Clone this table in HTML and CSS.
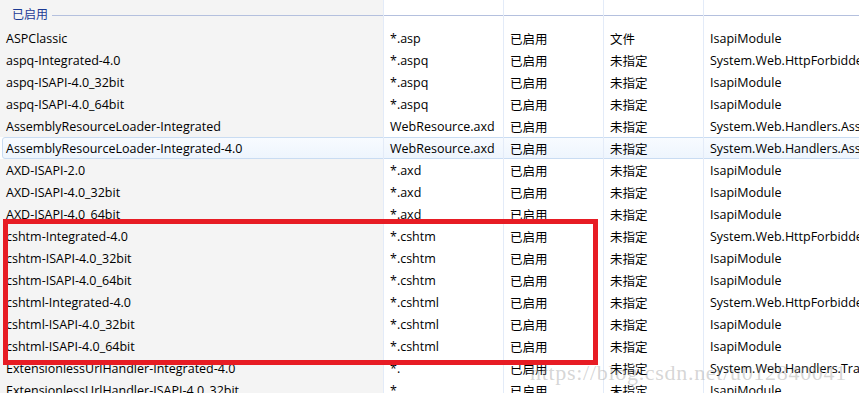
FILE: index.html
```html
<!DOCTYPE html>
<html lang="zh-CN">
<head>
<meta charset="utf-8">
<title>处理程序映射</title>
<link rel="stylesheet" href="styles.css">
</head>
<body>
<div class="list">
  <div class="row group">
    <div class="cell c1"><span class="group-title">已启用</span><span class="group-line"></span></div>
    <div class="cell c2"><span class="group-line full"></span></div>
    <div class="cell c3"><span class="group-line full"></span></div>
    <div class="cell c4"><span class="group-line full"></span></div>
    <div class="cell c5"><span class="group-line full"></span></div>
  </div>
  <div class="row"><div class="cell c1">ASPClassic</div><div class="cell c2">*.asp</div><div class="cell c3">已启用</div><div class="cell c4">文件</div><div class="cell c5">IsapiModule</div></div>
  <div class="row"><div class="cell c1">aspq-Integrated-4.0</div><div class="cell c2">*.aspq</div><div class="cell c3">已启用</div><div class="cell c4">未指定</div><div class="cell c5">System.Web.HttpForbiddenHandler</div></div>
  <div class="row"><div class="cell c1">aspq-ISAPI-4.0_32bit</div><div class="cell c2">*.aspq</div><div class="cell c3">已启用</div><div class="cell c4">未指定</div><div class="cell c5">IsapiModule</div></div>
  <div class="row"><div class="cell c1">aspq-ISAPI-4.0_64bit</div><div class="cell c2">*.aspq</div><div class="cell c3">已启用</div><div class="cell c4">未指定</div><div class="cell c5">IsapiModule</div></div>
  <div class="row"><div class="cell c1">AssemblyResourceLoader-Integrated</div><div class="cell c2">WebResource.axd</div><div class="cell c3">已启用</div><div class="cell c4">未指定</div><div class="cell c5">System.Web.Handlers.AssemblyResourceLoader</div></div>
  <div class="row selected"><div class="cell c1">AssemblyResourceLoader-Integrated-4.0</div><div class="cell c2">WebResource.axd</div><div class="cell c3">已启用</div><div class="cell c4">未指定</div><div class="cell c5">System.Web.Handlers.AssemblyResourceLoader</div></div>
  <div class="row"><div class="cell c1">AXD-ISAPI-2.0</div><div class="cell c2">*.axd</div><div class="cell c3">已启用</div><div class="cell c4">未指定</div><div class="cell c5">IsapiModule</div></div>
  <div class="row"><div class="cell c1">AXD-ISAPI-4.0_32bit</div><div class="cell c2">*.axd</div><div class="cell c3">已启用</div><div class="cell c4">未指定</div><div class="cell c5">IsapiModule</div></div>
  <div class="row"><div class="cell c1">AXD-ISAPI-4.0_64bit</div><div class="cell c2">*.axd</div><div class="cell c3">已启用</div><div class="cell c4">未指定</div><div class="cell c5">IsapiModule</div></div>
  <div class="row"><div class="cell c1">cshtm-Integrated-4.0</div><div class="cell c2">*.cshtm</div><div class="cell c3">已启用</div><div class="cell c4">未指定</div><div class="cell c5">System.Web.HttpForbiddenHandler</div></div>
  <div class="row"><div class="cell c1">cshtm-ISAPI-4.0_32bit</div><div class="cell c2">*.cshtm</div><div class="cell c3">已启用</div><div class="cell c4">未指定</div><div class="cell c5">IsapiModule</div></div>
  <div class="row"><div class="cell c1">cshtm-ISAPI-4.0_64bit</div><div class="cell c2">*.cshtm</div><div class="cell c3">已启用</div><div class="cell c4">未指定</div><div class="cell c5">IsapiModule</div></div>
  <div class="row"><div class="cell c1">cshtml-Integrated-4.0</div><div class="cell c2">*.cshtml</div><div class="cell c3">已启用</div><div class="cell c4">未指定</div><div class="cell c5">System.Web.HttpForbiddenHandler</div></div>
  <div class="row"><div class="cell c1">cshtml-ISAPI-4.0_32bit</div><div class="cell c2">*.cshtml</div><div class="cell c3">已启用</div><div class="cell c4">未指定</div><div class="cell c5">IsapiModule</div></div>
  <div class="row"><div class="cell c1">cshtml-ISAPI-4.0_64bit</div><div class="cell c2">*.cshtml</div><div class="cell c3">已启用</div><div class="cell c4">未指定</div><div class="cell c5">IsapiModule</div></div>
  <div class="row"><div class="cell c1">ExtensionlessUrlHandler-Integrated-4.0</div><div class="cell c2">*.</div><div class="cell c3">已启用</div><div class="cell c4">未指定</div><div class="cell c5">System.Web.Handlers.TransferRequestHandler</div></div>
  <div class="row"><div class="cell c1">ExtensionlessUrlHandler-ISAPI-4.0_32bit</div><div class="cell c2">*.</div><div class="cell c3">已启用</div><div class="cell c4">未指定</div><div class="cell c5">IsapiModule</div></div>
  <div class="highlight"></div>
  <div class="watermark">https://blog.csdn.net/u012840041</div>
</div>
</body>
</html>
```
FILE: styles.css
```css
html, body {
  margin: 0;
  padding: 0;
  background: #ffffff;
  overflow: hidden;
}
.list {
  position: relative;
  width: 859px;
  height: 393px;
  overflow: hidden;
  font-family: "Open Sans", "Noto Sans CJK SC", sans-serif;
  font-size: 12.5px;
  color: #000;
}
.row {
  display: grid;
  grid-template-columns: 384px 120px 100px 100px 1fr;
  height: 22px;
  align-items: stretch;
}
.row.group {
  height: 27px;
}
.cell {
  display: flex;
  align-items: center;
  padding-left: 6px;
  white-space: nowrap;
  overflow: hidden;
  border-right: 1px solid #e3ebf8;
  box-sizing: border-box;
}
.c1 {
  background: #f4f4f4;
}
.c5 {
  border-right: none;
}
.group .cell {
  padding-top: 4px;
  align-items: flex-start;
}
.group .c1 {
  padding-left: 12px;
}
.group-title {
  color: #1c3a94;
  font-size: 12px;
  line-height: 22px;
}
.group-line {
  flex: 1;
  height: 1px;
  background: #b4c0de;
  margin-top: 11px;
  margin-left: 4px;
}
.group-line.full {
  margin-left: -6px;
  margin-right: -1px;
}
.row.selected {
  position: relative;
}
.row.selected::before {
  content: "";
  position: absolute;
  left: 2px;
  right: -4px;
  top: 0;
  bottom: 0;
  border: 1px solid #c9dcf2;
  border-radius: 3px;
  background: linear-gradient(#f8fbff, #eef5fd);
}
.row.selected .cell {
  position: relative;
  background: transparent;
}
.highlight {
  position: absolute;
  left: 3px;
  top: 219px;
  width: 595px;
  height: 146px;
  border: 5px solid #e71c24;
  box-sizing: border-box;
  pointer-events: none;
}
.watermark {
  position: absolute;
  left: 530px;
  top: 362px;
  font-family: "Liberation Serif", serif;
  font-size: 22px;
  line-height: 22px;
  letter-spacing: 0.7px;
  color: rgba(150, 150, 150, 0.4);
  white-space: nowrap;
  pointer-events: none;
}
```
